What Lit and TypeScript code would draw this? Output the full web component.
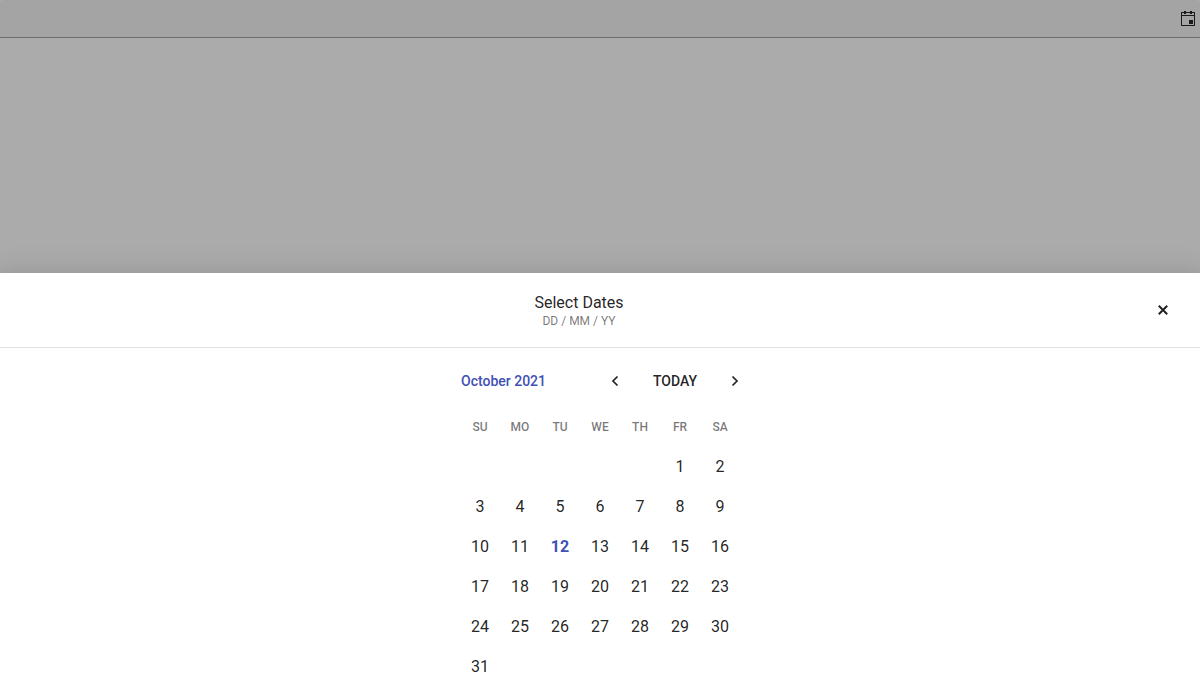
import { LitElement, html, css } from "lit";
import { customElement } from "lit/decorators.js";

const DAYS = ["SU", "MO", "TU", "WE", "TH", "FR", "SA"];
const DATES = Array.from({ length: 31 }, (_, i) => i + 1);

@customElement("app-root")
class AppRoot extends LitElement {
  static styles = css`
    :host { display: block; height: 682px; overflow: hidden; position: relative; background: #ababab; font-family: Roboto, sans-serif; color: rgba(0,0,0,.87); }
    * { box-sizing: border-box; }
    svg { display: block; flex: none; }
    .page { display: flex; flex-direction: column; height: 100%; }
    .field { height: 38px; flex: none; display: flex; justify-content: flex-end; align-items: flex-start; padding: 10px 4px 0 0; background: #a4a4a4; border-bottom: 1px solid #6b6b6b; border-radius: 4px 4px 0 0; color: #1a1a1a; }
    .space { flex: 1; }
    .sheet { height: 409px; flex: none; background: #fff; box-shadow: 0 8px 10px -5px rgba(0,0,0,.2), 0 16px 24px 2px rgba(0,0,0,.14), 0 6px 30px 5px rgba(0,0,0,.12); }
    header { height: 75px; display: flex; align-items: center; border-bottom: 1px solid #e0e0e0; padding-right: 25px; }
    .heading { flex: 1; text-align: center; padding: 2px 0 0 7px; }
    .title { font-size: 16px; line-height: 20px; }
    .hint { font-size: 12px; line-height: 16px; color: rgba(0,0,0,.54); }
    .calendar { width: 280px; margin: 0 auto; }
    .nav { height: 66px; display: flex; align-items: center; font-size: 14px; font-weight: 500; padding-left: 1px; }
    .month { color: #3f51b5; width: 142px; flex: none; }
    .today { width: 96px; flex: none; text-align: center; }
    .grid { display: grid; grid-template-columns: repeat(7, 40px); }
    .day { height: 33px; line-height: 26px; text-align: center; font-size: 12px; font-weight: 500; color: rgba(0,0,0,.54); }
    .date { height: 40px; line-height: 40px; text-align: center; font-size: 16px; }
    .date:first-child { grid-column: 6; }
    .current { color: #3f51b5; font-weight: 700; }
  `;

  render() {
    return html`<div class="page">
      <div class="field">
        <svg width="16" height="16" viewBox="0 0 16 16" fill="currentColor"><path fill-rule="evenodd" d="M1.5 2h13l.5.5v13l-.5.5h-13l-.5-.5v-13zM2 3v2h12V3zM2 6v9h12V6z"/><path d="M4 1h2v3H4zM10 1h2v3h-2zM9 10h4v4H9z"/></svg>
      </div>
      <div class="space"></div>
      <section class="sheet">
        <header>
          <div class="heading"><div class="title">Select Dates</div><div class="hint">DD / MM / YY</div></div>
          <svg width="24" height="24" viewBox="0 0 24 24" fill="none" stroke="currentColor" stroke-width="2"><path d="M7.8 7.8l8.4 8.4M16.2 7.8l-8.4 8.4"/></svg>
        </header>
        <div class="calendar">
          <div class="nav">
            <span class="month">October 2021</span>
            <svg width="24" height="24" viewBox="0 0 24 24" fill="none" stroke="currentColor" stroke-width="1.7"><path d="M14.5 7.5L10 12l4.5 4.5"/></svg>
            <span class="today">TODAY</span>
            <svg width="24" height="24" viewBox="0 0 24 24" fill="none" stroke="currentColor" stroke-width="1.7"><path d="M9.5 7.5L14 12l-4.5 4.5"/></svg>
          </div>
          <div class="grid">${DAYS.map((d) => html`<div class="day">${d}</div>`)}</div>
          <div class="grid">${DATES.map((n) => html`<div class="date ${n === 12 ? "current" : ""}">${n}</div>`)}</div>
        </div>
      </section>
    </div>`;
  }
}
